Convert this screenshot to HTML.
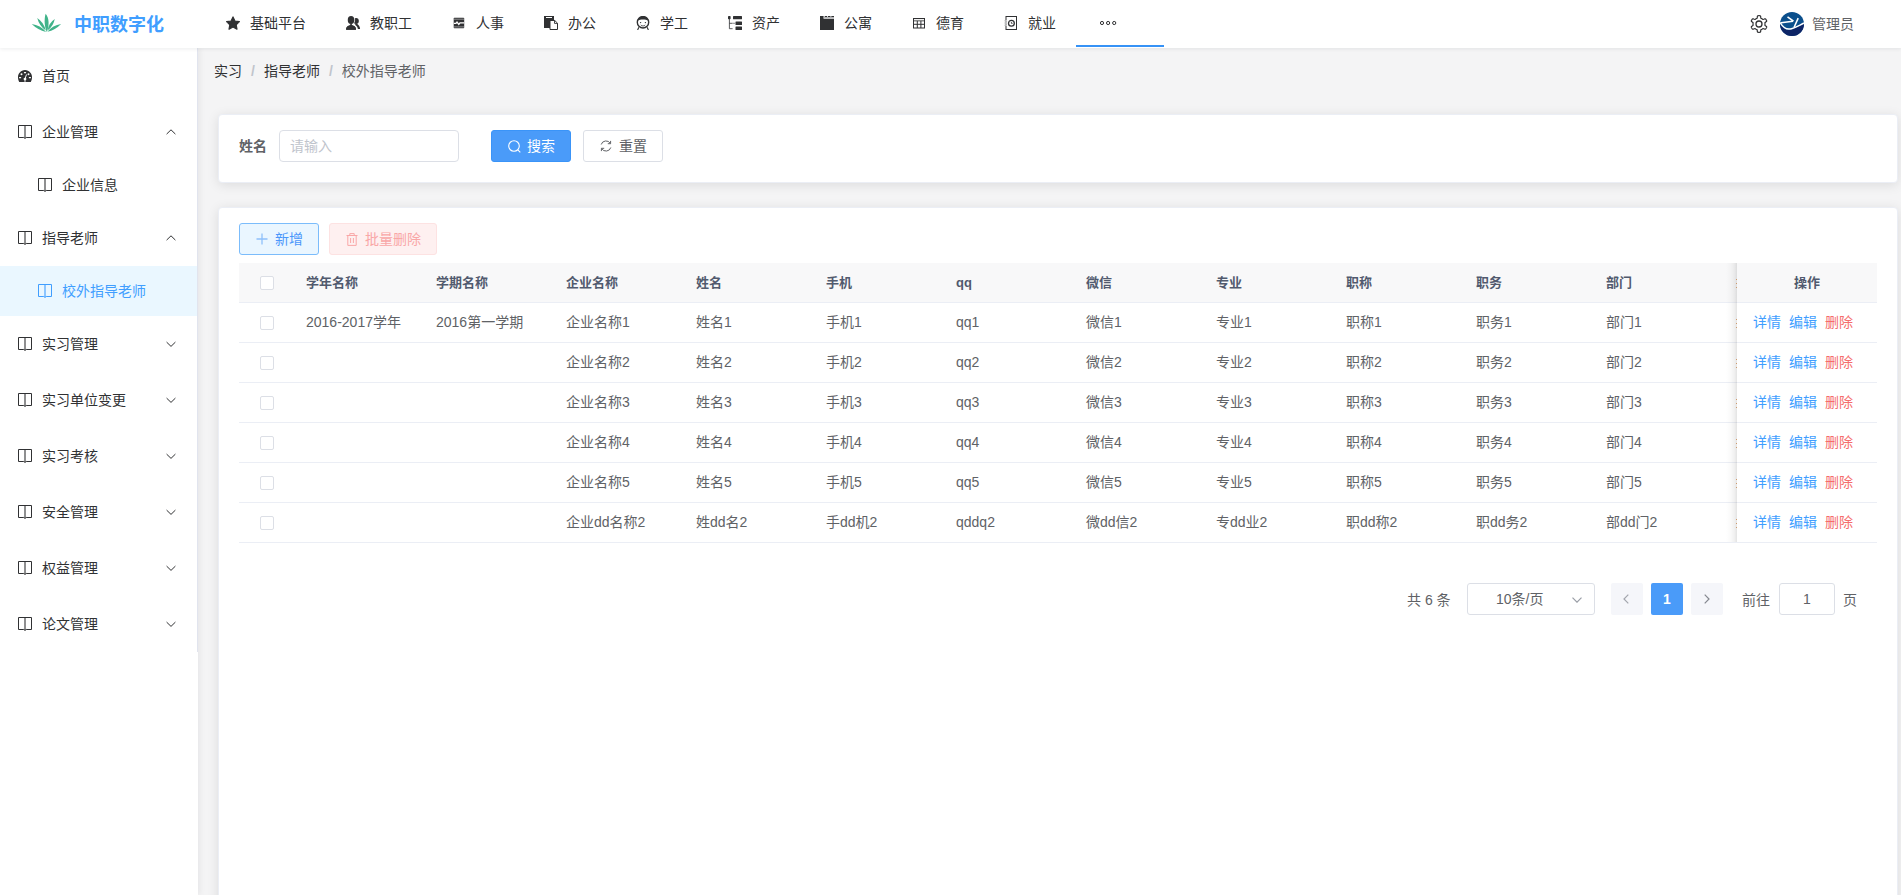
<!DOCTYPE html>
<html lang="zh-CN">
<head>
<meta charset="utf-8">
<title>中职数字化</title>
<style>
*{box-sizing:border-box;margin:0;padding:0}
html,body{width:1901px;height:895px;overflow:hidden;background:#f4f4f5}
body{font-family:"Liberation Sans","Noto Sans CJK SC",sans-serif;font-size:14px;color:#303133;position:relative}
svg{display:block}
/* header */
.hd{position:absolute;left:0;top:0;width:1901px;height:48px;background:#fff;box-shadow:0 1px 4px rgba(0,21,41,.08);z-index:10}
.logo{position:absolute;left:31px;top:12px}
.brand{position:absolute;left:74px;top:0;height:48px;line-height:51px;font-size:18px;font-weight:700;color:#409eff;letter-spacing:0}
.nav{position:absolute;left:0;top:0;height:48px}
.nav .it{position:absolute;top:0;height:48px;line-height:46px;font-size:14px;color:#303133;white-space:nowrap}
.nav .it svg{position:absolute;top:15px}
.nav .more{position:absolute;left:1076px;top:0;width:88px;height:47px;border-bottom:2px solid #3692f6}
.user{position:absolute;left:1812px;top:0;line-height:49px;font-size:14px;color:#606266}
/* sidebar */
.sd{position:absolute;left:0;top:48px;width:198px;height:847px;background:#fff;box-shadow:2px 0 6px rgba(0,21,41,.06);z-index:5}
.sd .bd{position:absolute;left:197px;top:0;width:1px;height:604px;background:#e1e4ee}
.mi{position:absolute;left:0;width:197px;height:56px;line-height:56px;font-size:14px;color:#303133;padding-left:42px;white-space:nowrap}
.mi.sub{height:50px;line-height:50px;padding-left:62px}
.mi.act{background:#eaf7ff;color:#409eff}
.mi .ic{position:absolute;left:18px;top:21px}
.mi.sub .ic{left:38px;top:18px}
.mi .ar{position:absolute;left:166px;top:25px}
/* main */
.bc{position:absolute;left:214px;top:48px;height:46px;line-height:46px;font-size:14px;color:#303133;white-space:nowrap}
.bc i{font-style:normal;color:#c0c4cc;margin:0 9px;font-weight:700}
.bc .last{color:#606266}
.card{position:absolute;left:218px;width:1680px;background:#fff;border:1px solid #ebeef5;border-radius:4px;box-shadow:0 2px 12px 0 rgba(0,0,0,.1)}
.c1{top:114px;height:69px}
.c2{top:207px;height:700px}
.lbl{position:absolute;left:20px;top:15px;line-height:32px;font-weight:700;color:#606266}
.inp{position:absolute;left:60px;top:15px;width:180px;height:32px;border:1px solid #dcdfe6;border-radius:4px;line-height:31px;padding-left:10px;font-size:14px;color:#c0c4cc}
.btn{position:absolute;height:32px;border-radius:3px;border:1px solid #dcdfe6;font-size:14px;line-height:30px;white-space:nowrap;color:#606266;background:#fff}
.btn svg{position:absolute}
.btn span{position:absolute;top:0}

/* table */
.tb{position:absolute;left:20px;top:55px;width:1638px;height:280px;font-size:14px;color:#606266}
.tr{position:absolute;left:0;width:1638px;height:40px;border-bottom:1px solid #ebeef5;line-height:39px;white-space:nowrap}
.tr.h{top:0;background:#f8f8f9;color:#515a6e;font-weight:700;font-size:13px}
.tr b,.tr span{position:absolute;top:0;font-weight:inherit}
.ck{position:absolute;left:21px;top:13px;width:14px;height:14px;border:1px solid #dcdfe6;border-radius:2px;background:#fff}
.fx{position:absolute;left:1498px;top:0;width:140px;height:280px;background:transparent}
.sh{position:absolute;left:1487px;top:0;width:11px;height:279px;background:linear-gradient(to right,rgba(0,0,0,0),rgba(0,0,0,.025) 45%,rgba(0,0,0,.055) 75%,rgba(0,0,0,.11));z-index:3}
.fx i{position:absolute;left:0;width:140px;height:39px;background:#fff}
.fx i.h{background:#f8f8f9}
.tr::after{content:"";position:absolute;left:1497px;top:16px;width:1px;height:1px;background:#cf9a6c;box-shadow:0 4px 0 #cf9a6c,0 8px 0 #cf9a6c;z-index:4}
.op{position:absolute;left:1498px;top:0;width:140px;text-align:center}
.tr .d{color:#409eff;left:1514px}
.tr .e{color:#409eff;left:1550px}
.tr .r{color:#f56c6c;left:1586px}
.tr .op2{font-size:13px}
/* pagination */
.pg{position:absolute;left:0;top:375px;width:1678px;height:32px;font-size:14px;color:#606266;line-height:32px;white-space:nowrap}
.pg>*{position:absolute;top:0}
.pg .sel{left:1248px;width:128px;height:32px;border:1px solid #dcdfe6;border-radius:3px;text-align:left;padding-left:28px;line-height:30px}
.pg .pb{width:32px;height:32px;background:#f5f6fa;border-radius:2px}
.pg .cur{left:1432px;width:32px;height:32px;background:#4a9bf9;color:#fff;font-weight:700;text-align:center;border-radius:2px}
.pg .jp{left:1560px;width:56px;height:32px;border:1px solid #dcdfe6;border-radius:3px;text-align:center;line-height:30px}
</style>
</head>
<body>
<div class="hd">
  <div class="logo"><svg width="32" height="22" viewBox="0 0 32 22"><g fill="#40b389"><path d="M14.600 1.800C18.400 6 18.300 14 15.800 19.900 13.500 15 12.900 8 14.600 1.800z"/><path d="M6.200 6Q13.100 10.500 14.700 18.600 8.300 13.700 6.200 6z"/><path d="M23.800 7.100Q22.400 14.200 16.600 18.600 17.600 11.200 23.800 7.100z"/><path d="M.7 12.100Q9.300 13.300 15.100 20 6.800 18.100 .7 12.100z"/><path d="M30.100 11.900Q21.700 13.100 16.300 19.800 24.400 17.900 30.100 11.900z"/></g></svg></div>
  <div class="brand">中职数字化</div>
  <div class="nav">
    <div class="it" style="left:226px"><svg style="left:0;top:16px" width="14" height="14" viewBox="0 0 14 14"><path d="M7 .9l1.950 4.100 4.450.600-3.250 3.100.820 4.500L7 11l-3.970 2.200.820-4.500L.6 5.600l4.450-.600z" fill="#303133" stroke="#303133" stroke-width="1.200" stroke-linejoin="round"/></svg><span style="margin-left:24px">基础平台</span></div>
    <div class="it" style="left:346px"><svg style="left:0;top:16px" width="15" height="14" viewBox="0 0 15 14"><ellipse cx="10.100" cy="5" rx="2.700" ry="2.900" fill="#303133"/><path d="M8.800 8.700l1.700-1.200c2.100 1 3.500 3 3.600 5.500h-2.200c-.2-1.800-1.400-3.400-3.100-4.300z" fill="#303133"/><g fill="#303133" stroke="#fff" stroke-width="1.600" paint-order="stroke"><path d="M.1 13.800C.1 11 1.200 10 3.400 9.400l.9-.3V7.500h1.500v1.600l.9.300c2.200.6 3.300 1.600 3.300 4.400z"/><ellipse cx="5.050" cy="4" rx="3.300" ry="4"/></g><path d="M.1 13.800C.1 11 1.200 10 3.400 9.400l.9-.3V7.500h1.500v1.600l.9.300c2.200.6 3.300 1.600 3.300 4.400z" fill="#303133"/></svg><span style="margin-left:24px">教职工</span></div>
    <div class="it" style="left:452px"><svg style="left:0;top:16px" width="14" height="14" viewBox="0 0 14 14"><rect x="1.700" y="1.800" width="10.500" height="10.500" rx=".7" fill="#303133"/><path d="M1.700 3.200h10.500M1.700 10.900h10.500" stroke="#d4d4d5" stroke-width=".6"/><path d="M1.900 7.300h2l1.100-1.300 1.800 2.400 1.200-1.500h4" stroke="#fff" stroke-width="1.300" fill="none"/></svg><span style="margin-left:24px">人事</span></div>
    <div class="it" style="left:544px"><svg style="left:0;top:16px" width="14" height="14" viewBox="0 0 14 14"><rect x="0" y="0" width="10" height="12" fill="#303133"/><rect x="2" y="1" width="6" height="1" fill="#fff"/><path d="M6 4.500h4.800L13.500 7.200V13.500H6z" fill="#fff" stroke="#303133" stroke-width="1"/><path d="M10.500 4.700V7.400h2.800" fill="none" stroke="#303133" stroke-width=".9"/></svg><span style="margin-left:24px">办公</span></div>
    <div class="it" style="left:636px"><svg style="left:0;top:16px" width="14" height="14" viewBox="0 0 14 14"><circle cx="7" cy="6.300" r="5.700" fill="#fff" stroke="#303133" stroke-width="1.400"/><path d="M1.400 5C2.200 1.900 4.500.3 7 .3s4.800 1.600 5.600 4.700C11 3.900 9 3.500 7 3.500s-4 .4-5.600 1.500z" fill="#303133"/><circle cx="4.600" cy="6.600" r=".7" fill="#303133"/><circle cx="9.400" cy="6.600" r=".7" fill="#303133"/><path d="M4.800 8.900c.7.800 1.400 1.100 2.200 1.100s1.500-.3 2.200-1.100" fill="none" stroke="#303133" stroke-width=".8"/><path d="M2.900 11.200L1.600 14M11.100 11.200l1.300 2.800" stroke="#303133" stroke-width="1.100"/></svg><span style="margin-left:24px">学工</span></div>
    <div class="it" style="left:728px"><svg style="left:0;top:16px" width="14" height="14" viewBox="0 0 14 14"><rect x="0" y="0" width="2.600" height="3.200" rx=".7" fill="#303133"/><path d="M1.400 3v9.700h3.200M1.400 7.300h3.200" fill="none" stroke="#303133" stroke-width=".8"/><rect x="5" y="0" width="9" height="3.300" rx=".5" fill="#303133"/><rect x="7.500" y="5.400" width="6.500" height="3.600" rx=".5" fill="#303133"/><rect x="7.500" y="10.500" width="6.500" height="3.500" rx=".5" fill="#303133"/><rect x="4.600" y="6.700" width="2.400" height="1.200" fill="#9a9b9d"/></svg><span style="margin-left:24px">资产</span></div>
    <div class="it" style="left:820px"><svg style="left:0;top:16px" width="14" height="14" viewBox="0 0 14 14"><path d="M0 0h3.600v2.800H14V14H0z" fill="#303133"/><rect x="3.600" y="1.100" width="10.400" height="1.200" fill="#a9aaac"/><path d="M4.700 0h2.500v.9H4.700zM8 0h2.500v.9H8zM11.300 0H14v.9h-2.700z" fill="#303133"/></svg><span style="margin-left:24px">公寓</span></div>
    <div class="it" style="left:912px"><svg style="left:0;top:16px" width="14" height="14" viewBox="0 0 14 14"><rect x="1.500" y="2.500" width="11" height="9.500" fill="#fff" stroke="#303133" stroke-width="1"/><path d="M1.500 4.800h11M1.500 8.300h11" stroke="#303133" stroke-width="1"/><path d="M5.300 4.800v7.200M8.900 4.800v7.200" stroke="#303133" stroke-width="1"/><rect x="2" y="3.800" width="10" height=".6" fill="#bbb"/></svg><span style="margin-left:24px">德育</span></div>
    <div class="it" style="left:1004px"><svg style="left:0;top:16px" width="14" height="14" viewBox="0 0 14 14"><rect x="2" y=".5" width="10.500" height="13" fill="#fff" stroke="#303133" stroke-width="1"/><circle cx="7.400" cy="7.200" r="2.900" fill="none" stroke="#303133" stroke-width="1.300"/><path d="M7.400 5.900v1.500h1.200" fill="none" stroke="#303133" stroke-width=".8"/><path d="M.8 4.800h2M.8 7h2M.8 9.200h2" stroke="#fff" stroke-width="1.600"/><path d="M.6 4.800h1.900M.6 7h1.900M.6 9.200h1.900" stroke="#77787b" stroke-width=".8"/></svg><span style="margin-left:24px">就业</span></div>
    <div class="more"><svg width="18" height="6" viewBox="0 0 18 6" style="position:absolute;left:23px;top:20px"><circle cx="3" cy="3" r="1.600" fill="none" stroke="#303133" stroke-width="1"/><circle cx="9.100" cy="3" r="1.600" fill="none" stroke="#303133" stroke-width="1"/><circle cx="15.200" cy="3" r="1.600" fill="none" stroke="#303133" stroke-width="1"/></svg></div>
  </div>
  <svg width="18" height="18" viewBox="0 0 18 18" style="position:absolute;left:1750px;top:15px"><path d="M6.00 3.80 6.28 3.65 6.56 3.52 6.85 3.40 7.14 3.27 7.26 2.52 7.38 1.38 7.70 0.80 8.13 0.75 8.57 0.71 9.00 0.70 9.43 0.71 9.87 0.75 10.30 0.80 10.62 1.38 10.74 2.52 10.86 3.27 11.15 3.40 11.44 3.52 11.72 3.65 12.00 3.80 12.27 3.97 12.53 4.15 12.78 4.34 13.03 4.52 13.74 4.26 14.79 3.79 15.45 3.78 15.71 4.12 15.96 4.48 16.19 4.85 16.40 5.23 16.58 5.62 16.75 6.03 16.41 6.59 15.48 7.26 14.89 7.75 14.93 8.06 14.97 8.37 14.99 8.69 15.00 9.00 14.99 9.31 14.97 9.63 14.93 9.94 14.89 10.25 15.48 10.74 16.41 11.41 16.75 11.97 16.58 12.38 16.40 12.77 16.19 13.15 15.96 13.52 15.71 13.88 15.45 14.22 14.79 14.21 13.74 13.74 13.03 13.48 12.78 13.66 12.53 13.85 12.27 14.03 12.00 14.20 11.72 14.35 11.44 14.48 11.15 14.60 10.86 14.73 10.74 15.48 10.62 16.62 10.30 17.20 9.87 17.25 9.43 17.29 9.00 17.30 8.57 17.29 8.13 17.25 7.70 17.20 7.38 16.62 7.26 15.48 7.14 14.73 6.85 14.60 6.56 14.48 6.28 14.35 6.00 14.20 5.73 14.03 5.47 13.85 5.22 13.66 4.97 13.48 4.26 13.74 3.21 14.21 2.55 14.22 2.29 13.88 2.04 13.52 1.81 13.15 1.60 12.77 1.42 12.38 1.25 11.97 1.59 11.41 2.52 10.74 3.11 10.25 3.07 9.94 3.03 9.63 3.01 9.31 3.00 9.00 3.01 8.69 3.03 8.37 3.07 8.06 3.11 7.75 2.52 7.26 1.59 6.59 1.25 6.03 1.42 5.62 1.60 5.23 1.81 4.85 2.04 4.48 2.29 4.12 2.55 3.78 3.21 3.79 4.26 4.26 4.97 4.52 5.22 4.34 5.47 4.15 5.73 3.97z" fill="none" stroke="#303133" stroke-width="1.200" stroke-linejoin="round"/><circle cx="9" cy="9" r="3" fill="none" stroke="#303133" stroke-width="1.300"/></svg>
  <svg width="24" height="24" viewBox="0 0 24 24" style="position:absolute;left:1780px;top:12px"><defs><clipPath id="av"><circle cx="12" cy="12" r="12"/></clipPath></defs><g clip-path="url(#av)"><rect width="24" height="24" fill="#0b4f8c"/><path d="M-1 10.500C3 17.500 7 18.600 11 17.600 16 16.300 20 13.500 25 11v14H-1z" fill="#0d2466"/><path d="M0 10.300C3.500 16.600 7.500 17.900 11.500 16.700 16 15.400 20 12.900 24.500 10.900" fill="none" stroke="#fff" stroke-width="1.500"/><path d="M1 10.800l12-1.600M7.500 4.800l6 4.400M18.200 6.200l-4.200 9.300" fill="none" stroke="#fff" stroke-width="1.600"/></g></svg>
  <div class="user">管理员</div>
</div>
<div class="sd">
  <div class="bd"></div>
  <div class="mi" style="top:0px"><svg class="ic" width="14" height="12" viewBox="0 0 14 12" style="top:22px"><path d="M1.200 11.900C-.5 9-.5 5 1.600 2.700 3 1.100 5 .1 7 .1s4 1 5.400 2.600c2.100 2.300 2.100 6.300.4 9.200z" fill="#303133"/><rect x="5.900" y="2" width="2.200" height="1.300" rx=".5" fill="#fff"/><circle cx="3.500" cy="4.200" r="1" fill="#fff"/><circle cx="10.500" cy="4.200" r="1" fill="#fff"/><rect x="1" y="6.900" width="2.200" height="1.300" rx=".5" fill="#fff"/><rect x="10.800" y="6.900" width="2.200" height="1.300" rx=".5" fill="#fff"/><path d="M8.500 4.500L7.100 8.600" stroke="#fff" stroke-width="1"/><circle cx="7" cy="9.100" r="1.400" fill="#fff"/><path d="M7 10v2" stroke="#fff" stroke-width=".8"/></svg>首页</div>
  <div class="mi" style="top:56px"><svg class="ic" width="14" height="14" viewBox="0 0 14 14"><path d="M.5.500h13v12H8.200L7 13.500 5.800 12.500H.5z" fill="none" stroke="#303133" stroke-width="1" stroke-linejoin="miter"/><path d="M7 .5v12.500" stroke="#303133" stroke-width="1.800" opacity=".6"/></svg>企业管理<svg class="ar" width="10" height="6" viewBox="0 0 10 6"><path d="M.6 5.100L5 .8l4.400 4.300" fill="none" stroke="#303133" stroke-width="1"/></svg></div>
  <div class="mi sub" style="top:112px"><svg class="ic" width="14" height="14" viewBox="0 0 14 14"><path d="M.5.500h13v12H8.200L7 13.500 5.800 12.500H.5z" fill="none" stroke="#303133" stroke-width="1" stroke-linejoin="miter"/><path d="M7 .5v12.500" stroke="#303133" stroke-width="1.800" opacity=".6"/></svg>企业信息</div>
  <div class="mi" style="top:162px"><svg class="ic" width="14" height="14" viewBox="0 0 14 14"><path d="M.5.500h13v12H8.200L7 13.500 5.800 12.500H.5z" fill="none" stroke="#303133" stroke-width="1" stroke-linejoin="miter"/><path d="M7 .5v12.500" stroke="#303133" stroke-width="1.800" opacity=".6"/></svg>指导老师<svg class="ar" width="10" height="6" viewBox="0 0 10 6"><path d="M.6 5.100L5 .8l4.400 4.300" fill="none" stroke="#303133" stroke-width="1"/></svg></div>
  <div class="mi sub act" style="top:218px"><svg class="ic" width="14" height="14" viewBox="0 0 14 14"><path d="M.5.500h13v12H8.200L7 13.500 5.800 12.500H.5z" fill="none" stroke="#409eff" stroke-width="1" stroke-linejoin="miter"/><path d="M7 .5v12.500" stroke="#409eff" stroke-width="1.800" opacity=".6"/></svg>校外指导老师</div>
  <div class="mi" style="top:268px"><svg class="ic" width="14" height="14" viewBox="0 0 14 14"><path d="M.5.500h13v12H8.200L7 13.500 5.800 12.500H.5z" fill="none" stroke="#303133" stroke-width="1" stroke-linejoin="miter"/><path d="M7 .5v12.500" stroke="#303133" stroke-width="1.800" opacity=".6"/></svg>实习管理<svg class="ar" width="10" height="6" viewBox="0 0 10 6"><path d="M.6 1.100L5 5.400 9.400 1.100" fill="none" stroke="#303133" stroke-width="1"/></svg></div>
  <div class="mi" style="top:324px"><svg class="ic" width="14" height="14" viewBox="0 0 14 14"><path d="M.5.500h13v12H8.200L7 13.500 5.800 12.500H.5z" fill="none" stroke="#303133" stroke-width="1" stroke-linejoin="miter"/><path d="M7 .5v12.500" stroke="#303133" stroke-width="1.800" opacity=".6"/></svg>实习单位变更<svg class="ar" width="10" height="6" viewBox="0 0 10 6"><path d="M.6 1.100L5 5.400 9.400 1.100" fill="none" stroke="#303133" stroke-width="1"/></svg></div>
  <div class="mi" style="top:380px"><svg class="ic" width="14" height="14" viewBox="0 0 14 14"><path d="M.5.500h13v12H8.200L7 13.500 5.800 12.500H.5z" fill="none" stroke="#303133" stroke-width="1" stroke-linejoin="miter"/><path d="M7 .5v12.500" stroke="#303133" stroke-width="1.800" opacity=".6"/></svg>实习考核<svg class="ar" width="10" height="6" viewBox="0 0 10 6"><path d="M.6 1.100L5 5.400 9.400 1.100" fill="none" stroke="#303133" stroke-width="1"/></svg></div>
  <div class="mi" style="top:436px"><svg class="ic" width="14" height="14" viewBox="0 0 14 14"><path d="M.5.500h13v12H8.200L7 13.500 5.800 12.500H.5z" fill="none" stroke="#303133" stroke-width="1" stroke-linejoin="miter"/><path d="M7 .5v12.500" stroke="#303133" stroke-width="1.800" opacity=".6"/></svg>安全管理<svg class="ar" width="10" height="6" viewBox="0 0 10 6"><path d="M.6 1.100L5 5.400 9.400 1.100" fill="none" stroke="#303133" stroke-width="1"/></svg></div>
  <div class="mi" style="top:492px"><svg class="ic" width="14" height="14" viewBox="0 0 14 14"><path d="M.5.500h13v12H8.200L7 13.500 5.800 12.500H.5z" fill="none" stroke="#303133" stroke-width="1" stroke-linejoin="miter"/><path d="M7 .5v12.500" stroke="#303133" stroke-width="1.800" opacity=".6"/></svg>权益管理<svg class="ar" width="10" height="6" viewBox="0 0 10 6"><path d="M.6 1.100L5 5.400 9.400 1.100" fill="none" stroke="#303133" stroke-width="1"/></svg></div>
  <div class="mi" style="top:548px"><svg class="ic" width="14" height="14" viewBox="0 0 14 14"><path d="M.5.500h13v12H8.200L7 13.500 5.800 12.500H.5z" fill="none" stroke="#303133" stroke-width="1" stroke-linejoin="miter"/><path d="M7 .5v12.500" stroke="#303133" stroke-width="1.800" opacity=".6"/></svg>论文管理<svg class="ar" width="10" height="6" viewBox="0 0 10 6"><path d="M.6 1.100L5 5.400 9.400 1.100" fill="none" stroke="#303133" stroke-width="1"/></svg></div>
</div>
<div class="bc">实习<i>/</i>指导老师<i>/</i><span class="last">校外指导老师</span></div>
<div class="card c1">
  <div class="lbl">姓名</div>
  <div class="inp">请输入</div>
  <div class="btn" style="left:272px;top:15px;width:80px;background:#4a9bf9;border-color:#3a94f8;color:#fff"><svg width="13" height="13" viewBox="0 0 13 13" style="left:16px;top:9px"><circle cx="6" cy="6" r="5.300" fill="none" stroke="#fff" stroke-width="1.100"/><path d="M9.800 9.800l2.500 2.500" stroke="#fff" stroke-width="1.100"/></svg><span style="left:35px">搜索</span></div>
  <div class="btn" style="left:364px;top:15px;width:80px"><svg width="12" height="12" viewBox="0 0 12 12" style="left:16px;top:9px"><path d="M1.200 4.500A5 5 0 0 1 10.300 3.400M10.800 7.500A5 5 0 0 1 1.700 8.600" fill="none" stroke="#606266" stroke-width="1"/><path d="M10.600.9v2.800H7.800M1.400 11.100V8.300h2.800" fill="none" stroke="#606266" stroke-width="1"/></svg><span style="left:35px">重置</span></div>
</div>
<div class="card c2">
  <div class="btn" style="left:20px;top:15px;width:80px;background:#eaf6ff;border-color:#7bbcfb;color:#4b97fb"><svg width="12" height="12" viewBox="0 0 12 12" style="left:16px;top:9px"><path d="M6 .5v11M.5 6h11" stroke="#8ec0fb" stroke-width="1.300"/></svg><span style="left:35px">新增</span></div>
  <div class="btn" style="left:110px;top:15px;width:108px;background:#fef0f0;border-color:#fde2e2;color:#f9a7a7"><svg width="12" height="13" viewBox="0 0 12 13" style="left:16px;top:9px"><path d="M.5 2.500h11M3.800 2.500V.6h4.400v1.900M1.800 2.500v9.900h8.400V2.500M4.600 5v5M7.400 5v5" fill="none" stroke="#f9a7a7" stroke-width="1"/></svg><span style="left:35px">批量删除</span></div>
  <div class="tb">
    <div class="fx"><i class="h" style="top:0"></i><i style="top:40px"></i><i style="top:80px"></i><i style="top:120px"></i><i style="top:160px"></i><i style="top:200px"></i><i style="top:240px"></i></div>
    <div class="tr h"><div class="ck"></div><b style="left:67px">学年名称</b><b style="left:197px">学期名称</b><b style="left:327px">企业名称</b><b style="left:457px">姓名</b><b style="left:587px">手机</b><b style="left:717px">qq</b><b style="left:847px">微信</b><b style="left:977px">专业</b><b style="left:1107px">职称</b><b style="left:1237px">职务</b><b style="left:1367px">部门</b><b class="op">操作</b></div>
    <div class="tr" style="top:40px"><div class="ck"></div><span style="left:67px">2016-2017学年</span><span style="left:197px">2016第一学期</span><span style="left:327px">企业名称1</span><span style="left:457px">姓名1</span><span style="left:587px">手机1</span><span style="left:717px">qq1</span><span style="left:847px">微信1</span><span style="left:977px">专业1</span><span style="left:1107px">职称1</span><span style="left:1237px">职务1</span><span style="left:1367px">部门1</span><span class="d">详情</span><span class="e">编辑</span><span class="r">删除</span></div>
    <div class="tr" style="top:80px"><div class="ck"></div><span style="left:327px">企业名称2</span><span style="left:457px">姓名2</span><span style="left:587px">手机2</span><span style="left:717px">qq2</span><span style="left:847px">微信2</span><span style="left:977px">专业2</span><span style="left:1107px">职称2</span><span style="left:1237px">职务2</span><span style="left:1367px">部门2</span><span class="d">详情</span><span class="e">编辑</span><span class="r">删除</span></div>
    <div class="tr" style="top:120px"><div class="ck"></div><span style="left:327px">企业名称3</span><span style="left:457px">姓名3</span><span style="left:587px">手机3</span><span style="left:717px">qq3</span><span style="left:847px">微信3</span><span style="left:977px">专业3</span><span style="left:1107px">职称3</span><span style="left:1237px">职务3</span><span style="left:1367px">部门3</span><span class="d">详情</span><span class="e">编辑</span><span class="r">删除</span></div>
    <div class="tr" style="top:160px"><div class="ck"></div><span style="left:327px">企业名称4</span><span style="left:457px">姓名4</span><span style="left:587px">手机4</span><span style="left:717px">qq4</span><span style="left:847px">微信4</span><span style="left:977px">专业4</span><span style="left:1107px">职称4</span><span style="left:1237px">职务4</span><span style="left:1367px">部门4</span><span class="d">详情</span><span class="e">编辑</span><span class="r">删除</span></div>
    <div class="tr" style="top:200px"><div class="ck"></div><span style="left:327px">企业名称5</span><span style="left:457px">姓名5</span><span style="left:587px">手机5</span><span style="left:717px">qq5</span><span style="left:847px">微信5</span><span style="left:977px">专业5</span><span style="left:1107px">职称5</span><span style="left:1237px">职务5</span><span style="left:1367px">部门5</span><span class="d">详情</span><span class="e">编辑</span><span class="r">删除</span></div>
    <div class="tr" style="top:240px"><div class="ck"></div><span style="left:327px">企业dd名称2</span><span style="left:457px">姓dd名2</span><span style="left:587px">手dd机2</span><span style="left:717px">qddq2</span><span style="left:847px">微dd信2</span><span style="left:977px">专dd业2</span><span style="left:1107px">职dd称2</span><span style="left:1237px">职dd务2</span><span style="left:1367px">部dd门2</span><span class="d">详情</span><span class="e">编辑</span><span class="r">删除</span></div>
    <div class="sh"></div>
  </div>
  <div class="pg">
    <span style="left:1188px;top:1px">共 6 条</span>
    <div class="sel">10条/页<svg width="10" height="6" viewBox="0 0 10 6" style="position:absolute;left:104px;top:13px"><path d="M.5.700L5 5.200 9.500.7" fill="none" stroke="#9a9ea6" stroke-width="1.200"/></svg></div>
    <div class="pb" style="left:1392px"><svg width="6" height="10" viewBox="0 0 6 10" style="margin:11px 0 0 12px"><path d="M5.300.7L1 5l4.300 4.300" fill="none" stroke="#a3a6ad" stroke-width="1.200"/></svg></div>
    <div class="cur">1</div>
    <div class="pb" style="left:1472px"><svg width="6" height="10" viewBox="0 0 6 10" style="margin:11px 0 0 13px"><path d="M.7.700L5 5 .7 9.300" fill="none" stroke="#85888f" stroke-width="1.200"/></svg></div>
    <span style="left:1523px;top:1px">前往</span>
    <div class="jp">1</div>
    <span style="left:1624px;top:1px">页</span>
  </div>
</div>
</body>
</html>
